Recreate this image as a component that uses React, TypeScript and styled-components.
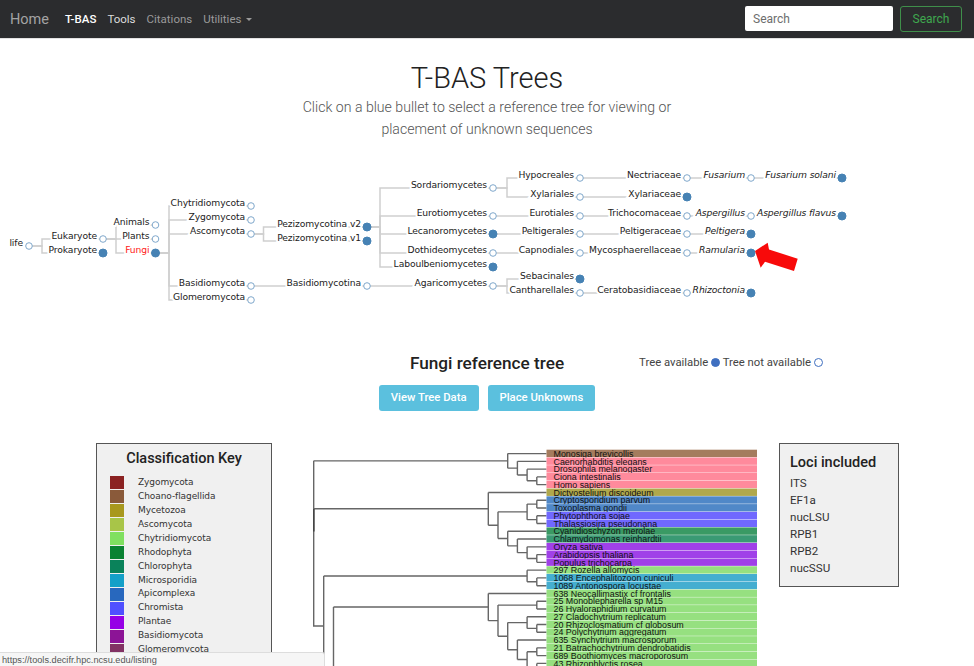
import * as React from 'react'
import styled, { createGlobalStyle } from 'styled-components';

/* Taxonomy tree data, page coordinates */

interface INode {
    name: string;
    x: number;
    y: number;
    filled?: boolean;
    italic?: boolean;
    red?: boolean;
}

const nodes: Record<string, INode> = {
    life: { name: 'life', x: 29, y: 245 },
    euk: { name: 'Eukaryote', x: 103, y: 238 },
    pro: { name: 'Prokaryote', x: 103, y: 252, filled: true },
    animals: { name: 'Animals', x: 155.5, y: 224 },
    plants: { name: 'Plants', x: 155.5, y: 238 },
    fungi: { name: 'Fungi', x: 155.5, y: 252, filled: true, red: true },
    chy: { name: 'Chytridiomycota', x: 251, y: 205 },
    zyg: { name: 'Zygomycota', x: 251, y: 219 },
    asc: { name: 'Ascomycota', x: 251, y: 233 },
    bas: { name: 'Basidiomycota', x: 251, y: 285 },
    glo: { name: 'Glomeromycota', x: 251, y: 299 },
    pv2: { name: 'Pezizomycotina v2', x: 367, y: 226, filled: true },
    pv1: { name: 'Pezizomycotina v1', x: 367, y: 240, filled: true },
    bna: { name: 'Basidiomycotina', x: 367, y: 285 },
    sor: { name: 'Sordariomycetes', x: 493, y: 187 },
    eur: { name: 'Eurotiomycetes', x: 493, y: 215 },
    lec: { name: 'Lecanoromycetes', x: 493, y: 233, filled: true },
    dot: { name: 'Dothideomycetes', x: 493, y: 252 },
    lab: { name: 'Laboulbeniomycetes', x: 493, y: 266, filled: true },
    aga: { name: 'Agaricomycetes', x: 493, y: 285 },
    hyp: { name: 'Hypocreales', x: 580, y: 177 },
    xyl: { name: 'Xylariales', x: 580, y: 196 },
    eut: { name: 'Eurotiales', x: 580, y: 215 },
    pel: { name: 'Peltigerales', x: 580, y: 233 },
    cap: { name: 'Capnodiales', x: 580, y: 252 },
    seb: { name: 'Sebacinales', x: 580, y: 278, filled: true },
    can: { name: 'Cantharellales', x: 580, y: 292 },
    nec: { name: 'Nectriaceae', x: 687, y: 177 },
    xya: { name: 'Xylariaceae', x: 687, y: 196, filled: true },
    tri: { name: 'Trichocomaceae', x: 687, y: 215 },
    pga: { name: 'Peltigeraceae', x: 687, y: 233 },
    myc: { name: 'Mycosphaerellaceae', x: 687, y: 252 },
    cer: { name: 'Ceratobasidiaceae', x: 687, y: 292 },
    fus: { name: 'Fusarium', x: 751, y: 177, italic: true },
    asp: { name: 'Aspergillus', x: 751, y: 215, italic: true },
    pgr: { name: 'Peltigera', x: 751, y: 233, filled: true, italic: true },
    ram: { name: 'Ramularia', x: 751, y: 252, filled: true, italic: true },
    rhi: { name: 'Rhizoctonia', x: 751, y: 292, filled: true, italic: true },
    fso: { name: 'Fusarium solani', x: 842, y: 177, filled: true, italic: true },
    afl: { name: 'Aspergillus flavus', x: 842, y: 215, filled: true, italic: true },
};

// parent id, x of the elbow, children ids
const links: [string, number, string[]][] = [
    ['life', 42, ['euk', 'pro']],
    ['euk', 116, ['animals', 'plants', 'fungi']],
    ['fungi', 169, ['chy', 'zyg', 'asc', 'bas', 'glo']],
    ['asc', 263.5, ['pv2', 'pv1']],
    ['bas', 263.5, ['bna']],
    ['pv2', 380, ['sor', 'eur', 'lec', 'dot', 'lab']],
    ['bna', 380, ['aga']],
    ['sor', 507, ['hyp', 'xyl']],
    ['eur', 507, ['eut']],
    ['lec', 507, ['pel']],
    ['dot', 507, ['cap']],
    ['aga', 507, ['seb', 'can']],
    ['hyp', 594, ['nec']],
    ['xyl', 594, ['xya']],
    ['eut', 594, ['tri']],
    ['pel', 594, ['pga']],
    ['cap', 594, ['myc']],
    ['can', 594, ['cer']],
    ['nec', 700, ['fus']],
    ['tri', 700, ['asp']],
    ['pga', 700, ['pgr']],
    ['myc', 700, ['ram']],
    ['cer', 700, ['rhi']],
    ['fus', 765, ['fso']],
    ['asp', 765, ['afl']],
];

/* Phylogeny data */

const GREEN = '#96e080';
const rows: [string, string][] = [
    ['Monosiga brevicollis', '#a57c5e'],
    ['Caenorhabditis elegans', '#ff8a9c'],
    ['Drosophila melanogaster', '#ff8a9c'],
    ['Ciona intestinalis', '#ff8a9c'],
    ['Homo sapiens', '#ff8a9c'],
    ['Dictyostelium discoideum', '#b0a84c'],
    ['Cryptosporidium parvum', '#5088c8'],
    ['Toxoplasma gondii', '#5088c8'],
    ['Phytophthora sojae', '#7068ff'],
    ['Thalassiosira pseudonana', '#7068ff'],
    ['Cyanidioschyzon merolae', '#3a9a64'],
    ['Chlamydomonas reinhardtii', '#3a9a74'],
    ['Oryza sativa', '#a040e8'],
    ['Arabidopsis thaliana', '#a040e8'],
    ['Populus trichocarpa', '#a040e8'],
    ['297 Rozella allomycis', GREEN],
    ['1068 Encephalitozoon cuniculi', '#44aed0'],
    ['1089 Antonospora locustae', '#44aed0'],
    ['638 Neocallimastix cf frontalis', GREEN],
    ['25 Monoblepharella sp M15', GREEN],
    ['26 Hyaloraphidium curvatum', GREEN],
    ['27 Cladochytrium replicatum', GREEN],
    ['20 Rhizoclosmatium cf globosum', GREEN],
    ['24 Polychytrium aggregatum', GREEN],
    ['635 Synchytrium macrosporum', GREEN],
    ['21 Batrachochytrium dendrobatidis', GREEN],
    ['689 Boothiomyces macroporosum', GREEN],
    ['43 Rhizophlyctis rosea', GREEN],
];

type Clade = number | Clade[];

const ROW_TOP = 449.7;
const ROW_H = 7.77;
const LEAF_X = 546.5;
const STEP = 9.7;

const rowY = (i: number) => ROW_TOP + ROW_H / 2 + ROW_H * i;

const clades: Clade[] = [
    [0, [1, [2, [3, 4]]]],
    [5, [[[6, 7], [8, 9]], [10, [11, [12, [13, 14]]]]]],
    [15, [16, 17]],
    [18, [[19, 20], [[21, [22, 23]], [24, [[25, 26], [27, 28]]]]]],
];

// lays a clade out, returns its elbow and pushes the line segments on the way
function layout(clade: Clade, segments: string[]): { x: number; y: number; h: number } {
    if (typeof clade === 'number') {
        return { x: LEAF_X, y: rowY(clade), h: 0 };
    }
    const kids = clade.map((c) => layout(c, segments));
    const h = Math.max(...kids.map((k) => k.h)) + 1;
    const x = LEAF_X - h * STEP;
    const y = kids.reduce((sum, k) => sum + k.y, 0) / kids.length;
    segments.push(`M${x} ${kids[0].y}V${kids[kids.length - 1].y}`);
    kids.forEach((k) => segments.push(`M${x} ${k.y}H${k.x}`));
    return { x, y, h };
}

function buildPhylogeny(): string {
    const segments: string[] = [];
    const [a, b, c, d] = clades.map((clade) => layout(clade, segments));
    segments.push(`M313.7 ${a.y}H${a.x}`);
    segments.push(`M313.7 ${b.y}H${b.x}`);
    segments.push(`M313.7 ${a.y}V626H323.7`);
    segments.push(`M323.7 ${c.y}H${c.x}`);
    segments.push(`M323.7 ${c.y}V720`);
    segments.push(`M333.5 ${d.y}H${d.x}`);
    segments.push(`M333.5 ${d.y}V720`);
    return segments.join('');
}

const keyItems: [string, string][] = [
    ['Zygomycota', '#8b2222'],
    ['Choano-flagellida', '#8a5a3a'],
    ['Mycetozoa', '#a8981e'],
    ['Ascomycota', '#a8c548'],
    ['Chytridiomycota', '#80e060'],
    ['Rhodophyta', '#0a8232'],
    ['Chlorophyta', '#0a825a'],
    ['Microsporidia', '#14a0c8'],
    ['Apicomplexa', '#2868be'],
    ['Chromista', '#5050ff'],
    ['Plantae', '#9600e6'],
    ['Basidiomycota', '#8c1496'],
    ['Glomeromycota', '#823264'],
];

const loci = ['ITS', 'EF1a', 'nucLSU', 'RPB1', 'RPB2', 'nucSSU'];

export default function App(): React.ReactElement {
    const taxa = Object.keys(nodes).map((id) => ({ id, ...nodes[id] }));

    return (<>
        <GlobalStyle/>
        <NavBar>
            <Brand>Home</Brand>
            <NavLink $tone='active'>T-BAS</NavLink>
            <NavLink $tone='bright'>Tools</NavLink>
            <NavLink>Citations</NavLink>
            <NavLink>Utilities<Caret/></NavLink>
            <SearchForm>
                <SearchInput placeholder='Search' readOnly/>
                <SearchButton>Search</SearchButton>
            </SearchForm>
        </NavBar>

        <Title>T-BAS Trees</Title>
        <Subtitle>Click on a blue bullet to select a reference tree for viewing or<br/>placement of unknown sequences</Subtitle>

        <TaxonomySvg viewBox='0 165 860 145'>
            {links.map(([parent, elbow, children]) => children.map((child) => (
                <Link key={child}
                    d={`M${nodes[parent].x} ${nodes[parent].y}H${elbow}V${nodes[child].y}H${nodes[child].x}`}/>
            )))}
            {taxa.map((n) => (
                <NodeLabel key={n.id} x={n.x - 6} y={n.y} $italic={n.italic} $red={n.red}>{n.name}</NodeLabel>
            ))}
            {taxa.map((n) => (
                <Bullet key={n.id} cx={n.x} cy={n.y} r={n.filled ? 4 : 3.3} $filled={n.filled}/>
            ))}
            <polygon fill='#f80a0a' points='755,250 767.7,241.7 769,248.5 797.7,257.7 794,270 765,260.7 760.7,266.7'/>
        </TaxonomySvg>

        <ReferenceRow>
            <span/>
            <ReferenceTitle>Fungi reference tree</ReferenceTitle>
            <Legend>
                Tree available <LegendDot $filled/> Tree not available <LegendDot/>
            </Legend>
        </ReferenceRow>
        <ButtonRow>
            <ActionButton>View Tree Data</ActionButton>
            <ActionButton>Place Unknowns</ActionButton>
        </ButtonRow>

        <LowerRow>
            <KeyPanel>
                <KeyTitle>Classification Key</KeyTitle>
                {keyItems.map(([name, color]) => (
                    <KeyRow key={name}>
                        <Swatch $color={color}/>
                        <KeyName>{name}</KeyName>
                    </KeyRow>
                ))}
            </KeyPanel>
            <PhylogenySvg viewBox='313 443 446 223'>
                <Branches d={buildPhylogeny()}/>
                <DarkBranch d='M313.7 509V531.5'/>
                {rows.map(([name, color], i) => (
                    <g key={i}>
                        <rect x={LEAF_X} y={ROW_TOP + ROW_H * i} width={210.5} height={ROW_H - 0.4} fill={color}/>
                        <RowText x={553.5} y={rowY(i) + 3.2}>{name}</RowText>
                    </g>
                ))}
            </PhylogenySvg>
            <LociPanel>
                <LociTitle>Loci included</LociTitle>
                {loci.map((l) => <LociItem key={l}>{l}</LociItem>)}
            </LociPanel>
        </LowerRow>

        <StatusBubble>https://tools.decifr.hpc.ncsu.edu/listing</StatusBubble>
    </>);
}

const GlobalStyle = createGlobalStyle`
    html, body{
        margin: 0;
        height: 666px;
        overflow: hidden;
        background: #fff;
        font-family: Roboto, "Liberation Sans", sans-serif;
    }
`;

const NavBar = styled.nav`
    display: flex;
    align-items: center;
    height: 38px;
    padding: 0 12px 0 10px;
    background: #2b2c2e;
    border-bottom: 1px solid #e2e2e2;
`;

const Brand = styled.a`
    font-size: 14.5px;
    color: #a3a3a3;
    width: 55px;
`;

const NavLink = styled.a<{ $tone?: string }>`
    font-size: 11.5px;
    margin-right: 11px;
    font-weight: ${(p) => (p.$tone === 'active' ? 500 : 400)};
    color: ${(p) => (p.$tone === 'active' ? '#ffffff' : p.$tone === 'bright' ? '#dcdcdc' : '#9a9a9a')};
`;

const Caret = styled.span`
    display: inline-block;
    margin-left: 5px;
    vertical-align: 2px;
    border-top: 3px solid #9a9a9a;
    border-left: 3px solid transparent;
    border-right: 3px solid transparent;
`;

const SearchForm = styled.div`
    display: flex;
    gap: 7px;
    margin-left: auto;
`;

const SearchInput = styled.input`
    box-sizing: border-box;
    width: 148px;
    height: 25px;
    padding: 0 8px;
    border: 0;
    border-radius: 2px;
    font: 12px Roboto, sans-serif;
    background: #fff;

    &::placeholder{
        color: #6d6d6d;
    }
`;

const SearchButton = styled.div`
    box-sizing: border-box;
    width: 62px;
    height: 26px;
    line-height: 24px;
    text-align: center;
    font-size: 12px;
    color: #3fa84e;
    border: 1px solid #3f8f4a;
    border-radius: 3px;
`;

const Title = styled.h1`
    margin: 22px 0 0;
    text-align: center;
    font-size: 29px;
    line-height: 34px;
    font-weight: 300;
    color: #222;
`;

const Subtitle = styled.p`
    margin: 2px 0 0;
    text-align: center;
    font-size: 14.1px;
    line-height: 21.6px;
    font-weight: 300;
    color: #555;
`;

const TaxonomySvg = styled.svg`
    display: block;
    width: 860px;
    height: 145px;
    margin-top: 25.8px;
`;

const Link = styled.path`
    fill: none;
    stroke: #cfcfcf;
    stroke-width: 1.5;
`;

const NodeLabel = styled.text<{ $italic?: boolean; $red?: boolean }>`
    font-family: "DejaVu Sans", sans-serif;
    font-size: 9.2px;
    letter-spacing: -0.1px;
    text-anchor: end;
    font-style: ${(p) => (p.$italic ? 'italic' : 'normal')};
    fill: ${(p) => (p.$red ? '#ff1a1a' : '#222')};
    stroke: #fff;
    stroke-width: 4px;
    paint-order: stroke;
`;

const Bullet = styled.circle<{ $filled?: boolean }>`
    fill: ${(p) => (p.$filled ? '#4682b4' : '#fff')};
    stroke: ${(p) => (p.$filled ? '#4682b4' : '#7fa8cc')};
    stroke-width: 1;
`;

const ReferenceRow = styled.div`
    display: grid;
    grid-template-columns: 1fr auto 1fr;
    align-items: center;
    margin-top: 41px;
    height: 22px;
`;

const ReferenceTitle = styled.h2`
    margin: 0;
    font-size: 17.2px;
    font-weight: 500;
    color: #222;
`;

const Legend = styled.div`
    margin-left: 75px;
    font-size: 11.3px;
    color: #444;
    white-space: nowrap;
`;

const LegendDot = styled.span<{ $filled?: boolean }>`
    display: inline-block;
    box-sizing: border-box;
    width: 9px;
    height: 9px;
    vertical-align: -1px;
    border-radius: 50%;
    background: ${(p) => (p.$filled ? '#3f6fc0' : '#fff')};
    border: 1px solid #3f6fc0;
`;

const ButtonRow = styled.div`
    display: flex;
    justify-content: center;
    gap: 9px;
    margin-top: 11px;
`;

const ActionButton = styled.div`
    display: flex;
    align-items: center;
    justify-content: center;
    padding: 0 12px;
    height: 26px;
    font-size: 11.3px;
    font-weight: 500;
    color: #fff;
    background: #5bc0de;
    border-radius: 3px;
`;

const LowerRow = styled.div`
    display: flex;
    align-items: flex-start;
    margin-top: 32px;
    padding-left: 96px;
`;

const Panel = styled.div`
    box-sizing: border-box;
    background: #f0f0f0;
    border: 1px solid #555;
    flex: none;
`;

const KeyPanel = styled(Panel)`
    width: 176px;
    height: 260px;
    padding: 5px 13px 0;
`;

const KeyTitle = styled.h3`
    margin: 0 0 7px;
    text-align: center;
    font-size: 14.5px;
    line-height: 20px;
    font-weight: 500;
    color: #222;
`;

const KeyRow = styled.div`
    display: flex;
    align-items: center;
    height: 13.95px;
`;

const Swatch = styled.span<{ $color: string }>`
    width: 14px;
    height: 13px;
    background: ${(p) => p.$color};
`;

const KeyName = styled.span`
    margin-left: 14px;
    padding-bottom: 2px;
    font-family: "DejaVu Sans", sans-serif;
    font-size: 9px;
    letter-spacing: -0.08px;
    color: #333;
`;

const PhylogenySvg = styled.svg`
    display: block;
    flex: none;
    width: 446px;
    height: 223px;
    margin-left: 41px;
`;

const Branches = styled.path`
    fill: none;
    stroke: #666;
    stroke-width: 1.4;
`;

const DarkBranch = styled.path`
    fill: none;
    stroke: #444;
    stroke-width: 1.8;
`;

const RowText = styled.text`
    font-family: "Liberation Sans", sans-serif;
    font-size: 8.9px;
    fill: #111;
`;

const LociPanel = styled(Panel)`
    width: 120px;
    height: 144px;
    margin-left: 20px;
    padding: 10px 10px 0;
`;

const LociTitle = styled.h3`
    margin: 0 0 3px;
    font-size: 14.5px;
    line-height: 18px;
    font-weight: 500;
    color: #222;
`;

const LociItem = styled.div`
    font-size: 11.6px;
    line-height: 17px;
    color: #333;
`;

const StatusBubble = styled.div`
    position: fixed;
    left: 0;
    bottom: 0;
    box-sizing: border-box;
    width: 325px;
    height: 14px;
    padding-left: 2px;
    line-height: 14px;
    font-family: "Liberation Sans", sans-serif;
    font-size: 9.2px;
    color: #555;
    background: #f6f6f6;
    border-top: 1px solid #ddd;
    border-right: 1px solid #ddd;
    border-top-right-radius: 3px;
`;
